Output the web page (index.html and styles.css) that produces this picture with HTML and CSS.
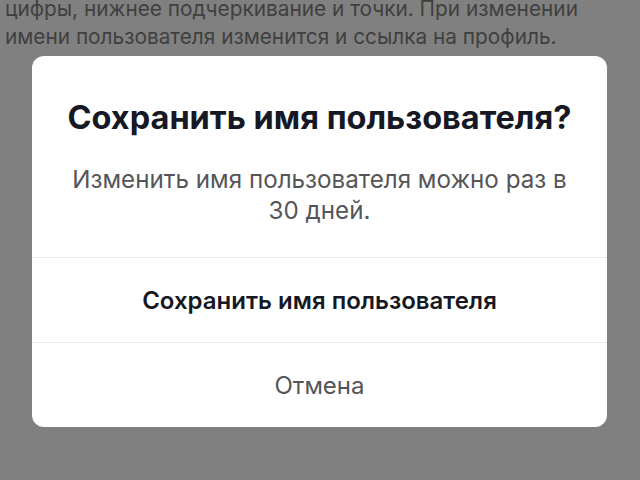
FILE: index.html
```html
<!DOCTYPE html>
<html lang="ru">
<head>
<meta charset="utf-8">
<link rel="stylesheet" href="styles.css">
</head>
<body>
<div class="page">
  <p class="page-text">цифры, нижнее подчеркивание и точки. При изменении<br>имени пользователя изменится и ссылка на профиль.</p>
</div>
<div class="dialog">
  <div class="dialog-body">
    <h1 class="dialog-title">Сохранить имя пользователя?</h1>
    <p class="dialog-text">Изменить имя пользователя можно раз в<br>30 дней.</p>
  </div>
  <div class="dialog-btn primary">Сохранить имя пользователя</div>
  <div class="dialog-btn secondary">Отмена</div>
</div>
</body>
</html>
```
FILE: styles.css
```css
html, body {
  margin: 0;
  padding: 0;
  background: #808080;
  overflow: hidden;
  height: 480px;
  font-family: "Inter", "Noto Sans", sans-serif;
}
.page {
  height: 56px;
  overflow: hidden;
}
.page-text {
  margin: -5px 0 0;
  padding: 0 0 0 5px;
  font-size: 20.8px;
  line-height: 28px;
  color: #3f3f3f;
  white-space: nowrap;
}
.dialog {
  margin: 0 33px 0 32px;
  background: #fff;
  border-radius: 12px;
  overflow: hidden;
}
.dialog-body {
  padding: 44px 20px 31px;
  text-align: center;
}
.dialog-title {
  margin: 0;
  font-size: 32.5px;
  line-height: 36px;
  font-weight: 700;
  color: #161823;
  white-space: nowrap;
}
.dialog-text {
  margin: 28px 0 0;
  font-size: 24.2px;
  line-height: 31px;
  color: #555559;
  white-space: nowrap;
}
.dialog-btn {
  height: 84px;
  display: flex;
  align-items: center;
  justify-content: center;
  border-top: 1px solid #ebebeb;
  font-size: 24px;
}
.primary {
  font-weight: 600;
  color: #161823;
}
.secondary {
  color: #555559;
}
```
